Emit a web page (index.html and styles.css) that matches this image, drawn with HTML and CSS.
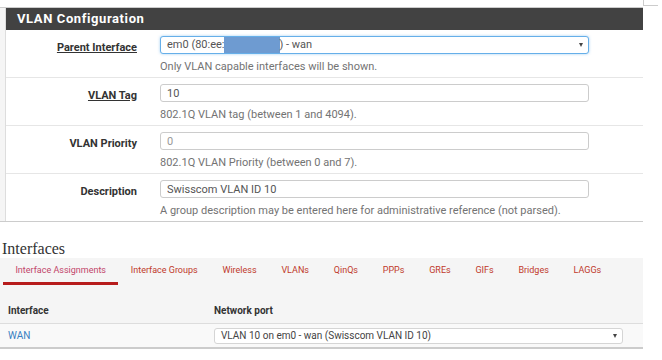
FILE: index.html
```html
<!DOCTYPE html>
<html lang="en">
<head>
  <meta charset="UTF-8" />
  <title>VLAN Configuration</title>
  <link rel="stylesheet" href="styles.css">
</head>
<body>
  <div class="top">
    <div class="top-main"></div>
    <div class="top-corner"></div>
  </div>

  <div class="panel-wrap">
    <div class="panel">
      <h2 class="panel-title">VLAN Configuration</h2>

      <div class="form-row">
        <label class="req">Parent Interface</label>
        <div class="field">
          <div class="select focus">em0 (80:ee:<span class="blur"></span>) - wan<span class="caret"></span></div>
          <div class="help">Only VLAN capable interfaces will be shown.</div>
        </div>
      </div>

      <div class="form-row">
        <label class="req">VLAN Tag</label>
        <div class="field">
          <input type="text" value="10">
          <div class="help">802.1Q VLAN tag (between 1 and 4094).</div>
        </div>
      </div>

      <div class="form-row">
        <label>VLAN Priority</label>
        <div class="field">
          <input type="text" placeholder="0">
          <div class="help">802.1Q VLAN Priority (between 0 and 7).</div>
        </div>
      </div>

      <div class="form-row">
        <label>Description</label>
        <div class="field">
          <input type="text" value="Swisscom VLAN ID 10">
          <div class="help">A group description may be entered here for administrative reference (not parsed).</div>
        </div>
      </div>
    </div>
  </div>

  <div class="page-title">Interfaces</div>

  <div class="iface-box">
    <ul class="tabs">
      <li class="active"><a href="#">Interface Assignments</a></li>
      <li><a href="#">Interface Groups</a></li>
      <li><a href="#">Wireless</a></li>
      <li><a href="#">VLANs</a></li>
      <li><a href="#">QinQs</a></li>
      <li><a href="#">PPPs</a></li>
      <li><a href="#">GREs</a></li>
      <li><a href="#">GIFs</a></li>
      <li><a href="#">Bridges</a></li>
      <li><a href="#">LAGGs</a></li>
    </ul>

    <table class="assign">
      <thead>
        <tr>
          <th class="col-if">Interface</th>
          <th>Network port</th>
        </tr>
      </thead>
      <tbody>
        <tr>
          <td class="col-if"><a href="#">WAN</a></td>
          <td><div class="select small">VLAN 10 on em0 - wan (Swisscom VLAN ID 10)<span class="caret"></span></div></td>
        </tr>
      </tbody>
    </table>
  </div>
</body>
</html>
```

FILE: styles.css
```css
body {
  margin: 0;
  font-family: Roboto, "Liberation Sans", sans-serif;
  color: #333;
  background: #fff;
}

.top {
  display: flex;
  height: 8px;
}

.top-main {
  width: 643px;
  height: 7px;
  border-bottom: 1px solid #ccc;
}

.top-corner {
  width: 14px;
  height: 5px;
  border-left: 1px solid #ccc;
  border-bottom: 1px solid #ccc;
}

.panel-wrap {
  width: 643px;
  padding-left: 5px;
  box-sizing: border-box;
  background: #f5f5f5;
  border-bottom: 1px solid #ccc;
}

.panel {
  background: #fff;
  border-left: 1px solid #ddd;
}

.panel-title {
  margin: 0;
  height: 22px;
  line-height: 22px;
  padding-left: 11px;
  background: #424242;
  color: #fff;
  font-size: 13px;
  font-weight: bold;
  letter-spacing: 0.6px;
}

.form-row {
  display: grid;
  grid-template-columns: 131px 429px;
  column-gap: 23px;
  padding: 6px 0 3px;
  border-top: 1px solid #e6e6e6;
}

.form-row:first-of-type {
  border-top: none;
}

.form-row label {
  text-align: right;
  padding-top: 3px;
  font-size: 11px;
  font-weight: bold;
  line-height: 18px;
  color: #333;
}

.form-row label.req {
  text-decoration: underline;
}

.field input,
.select {
  display: block;
  width: 100%;
  height: 18px;
  box-sizing: border-box;
  margin: 0;
  padding: 0 6px;
  border: 1px solid #ccc;
  border-radius: 3px;
  font-family: inherit;
  font-size: 11px;
  color: #555;
  background: #fff;
  outline: none;
}

.field input::placeholder {
  color: #999;
}

.select {
  position: relative;
  line-height: 16px;
}

.select.focus {
  border-color: #66afe9;
  box-shadow: 0 0 3px rgba(102, 175, 233, 0.6);
}

.blur {
  display: inline-block;
  width: 56px;
  height: 16px;
  margin-left: -1px;
  vertical-align: top;
  background: #6e9bd1;
}

.caret {
  position: absolute;
  right: 5px;
  top: 6px;
  border-left: 2.5px solid transparent;
  border-right: 2.5px solid transparent;
  border-top: 4px solid #444;
}

.help {
  margin-top: 6px;
  line-height: 14px;
  font-size: 11px;
  color: #737373;
}

.page-title {
  margin: 18px 0 0 2px;
  font-family: "Liberation Serif", serif;
  font-size: 16px;
  line-height: 18px;
}

.iface-box {
  width: 643px;
  background: #f5f5f5;
}

.tabs {
  list-style: none;
  display: flex;
  margin: 0 0 0 3px;
  padding: 0;
  white-space: nowrap;
}

.tabs li {
  flex-shrink: 0;
}

.tabs li a {
  display: block;
  padding: 6px 12.4px 6px;
  font-size: 9px;
  line-height: 12px;
  color: #c0392b;
  text-decoration: none;
  border-bottom: 3px solid transparent;
}

.tabs li.active a {
  color: #c2456a;
  border-bottom-color: #b71c1c;
}

.assign {
  width: 100%;
  border-collapse: collapse;
  margin-top: 14px;
  font-size: 10px;
}

.assign th {
  text-align: left;
  padding: 6px 8px 6px;
  line-height: 12px;
  border-bottom: 1px solid #ddd;
}

.assign .col-if {
  width: 190px;
}

.assign td {
  padding: 4px 8px 3px;
  background: #f9f9f9;
  vertical-align: top;
  border-bottom: 2px solid #ccc;
}

.assign td a {
  color: #3a7fc1;
  text-decoration: none;
  line-height: 15px;
}

.select.small {
  width: 409px;
  height: 16px;
  line-height: 14px;
  font-size: 10px;
  border-color: #d5d5d5;
  color: #444;
}

.select.small .caret {
  top: 5px;
}
```
